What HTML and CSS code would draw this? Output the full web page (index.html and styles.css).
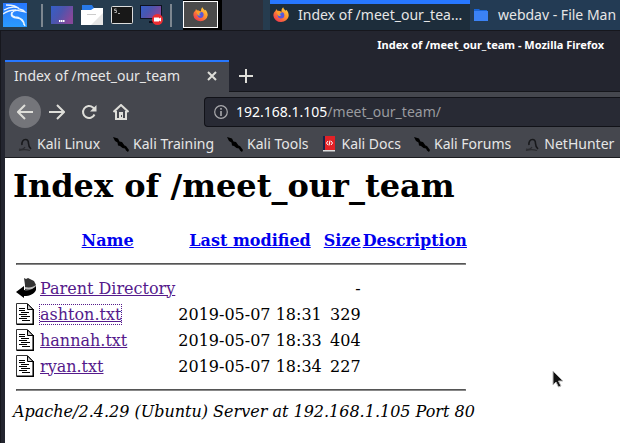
FILE: index.html
```html
<!DOCTYPE html>
<html lang="en">
<head>
<meta charset="utf-8">
<title>Index of /meet_our_team</title>
<link rel="stylesheet" href="styles.css">
</head>
<body>
<svg class="defs" aria-hidden="true">
  <defs>
    <linearGradient id="screen" x1="0" y1="0" x2="1" y2=".5"><stop offset="0" stop-color="#345fc8"/><stop offset=".5" stop-color="#4c55ae"/><stop offset="1" stop-color="#86489b"/></linearGradient>
    <linearGradient id="flame" x1="1" y1="0" x2=".2" y2="1"><stop offset="0" stop-color="#ffe14a"/><stop offset=".45" stop-color="#ff9a2e"/><stop offset="1" stop-color="#f0334f"/></linearGradient>
    <linearGradient id="kali" x1="0" y1="0" x2="0" y2="1"><stop offset="0" stop-color="#2777ff"/><stop offset="1" stop-color="#2a9bff"/></linearGradient>
    <symbol id="firefox" viewBox="0 0 16 16">
      <path fill="url(#flame)" d="M3.2 2.1 4.6 4l1.5-.2L8.5 5c-.2-2 .3-3.700 1.700-4.800.2 1.700 1.600 2.300 2.600 3.600l.5-1c1.600 1.700 2.500 3.800 2.400 6.100A7.700 7.100 0 0 1 .4 8.700C.3 6.200 1.300 4.800 2.500 4z"/>
      <circle cx="8" cy="8.300" r="3.300" fill="#5b55d8"/>
      <path fill="#2aa2f5" d="m5 6 3.700.2-1.500 2-2.200 1z"/>
      <path fill="#ff9b2b" d="M3.200 4.200c1.500-.7 2.700-.5 3.500.4l2.100.5c.2.8-1.800 1-2.100 2-.2 1 .5 1.500 1.500 1.300-.8 1.200-2.700.8-3.600-.8z"/>
    </symbol>
    <symbol id="dragon" viewBox="0 0 16 16">
      <path fill="none" stroke="#18191c" stroke-width="1.600" d="M5 9C4.500 6 6 3.500 8.500 3.500c2 0 3 1.500 3 4 0 2 .5 3.500 2.500 5.500"/>
      <path fill="none" stroke="#2b2c30" stroke-width="1.300" d="M2 13c3 1 5 0 6-2M2 14.500c3-1 8-1 11 0"/>
    </symbol>
    <symbol id="blade" viewBox="0 0 16 16">
      <path d="M0 1l5 1.500 1.500 3L9 6l2.500 3.500 1.500.5 3 4-1 2-2-1.500-1-2L9.500 12 7 10 5 9.500 4.500 6.500 2 5z"/>
    </symbol>
    <symbol id="file" viewBox="0 0 20 22">
      <path fill="#fff" stroke="#333" d="M.5.5h11l6 6v15H.5z"/>
      <path stroke="#000" stroke-width="1.500" d="M17.200 6v15.300H1" fill="none"/>
      <path fill="#ccc" stroke="#000" d="M11.500 1v5.500H17z"/>
      <path stroke="#000" d="M3 5.500h6M3 7.500h6M5 9.500h8M3 11.500h8M5 13.500h9M3 15.500h8M6 17.500h8"/>
    </symbol>
  </defs>
</svg>

<header class="panel">
  <nav class="launchers" aria-label="Launchers">
    <button class="launch" aria-label="Applications"><svg width="24" height="24" viewBox="0 0 24 24"><path fill="url(#kali)" d="M0 0h24v24H0z"/><path fill="none" stroke="#e8f4ff" stroke-width="1.300" d="M1 7c5-3 9-4 15-2M0 11c5-4 9-4 13-4M3 2c6 0 11 1 13 4l4 1 2 2-5-1c-2-1-4-1-6 0-3 2-3 5 1 6 5 0 8 3 10 9M9 9c-2 4 1 6 5 6s7 2 7 7"/></svg></button>
    <span class="divider"></span>
    <button class="launch" aria-label="Show desktop"><svg width="22" height="18" viewBox="0 0 22 18"><path fill="url(#screen)" d="M0 0h22v18H0z"/><path stroke="#fff" stroke-width="2" stroke-dasharray="1.500 .5" d="M8 15h6"/></svg></button>
    <button class="launch" aria-label="File manager"><svg width="22" height="20" viewBox="0 0 22 20"><path fill="#2879e8" d="M1 0h10l2 3h8v6H1z"/><path fill="#fff" d="M0 5h10l3-2h9v17H0z"/><path fill="#e5e5e5" d="m22 8-12 12h12z"/><path stroke="#ccc" d="M6 9.500h9"/></svg></button>
    <button class="launch" aria-label="Terminal"><svg width="22" height="18" viewBox="0 0 22 18"><rect x=".5" y=".5" width="21" height="17" rx="1" fill="#181818" stroke="#ddd"/><path d="M5.500 3H3.500v1.500h2v2h-2M7 7.500h2" fill="none" stroke="#aaa"/></svg></button>
    <button class="launch" aria-label="Screen recorder"><svg width="24" height="22" viewBox="0 0 24 22"><path fill="#0e1220" d="M0 1h22v14H0zM9 17h8v2H9z"/><path fill="url(#screen)" d="M1 2h20v12H1z"/><circle cx="17.500" cy="15.500" r="5.500" fill="#ed2d32"/><path fill="#fff" d="M14 13.500h5v1l2-1v4l-2-1v1h-5z"/></svg></button>
    <span class="divider"></span>
  </nav>
  <button class="workspace" aria-label="Workspace 1"><svg width="15" height="15"><use href="#firefox"/></svg></button>
  <span class="workspace-empty"></span>
  <nav class="tasks" aria-label="Open windows">
    <button class="task active"><svg width="16" height="16"><use href="#firefox"/></svg><span>Index of /meet_our_tea...</span></button>
    <button class="task"><svg width="16" height="16" viewBox="0 0 16 16"><path fill="#1763d5" d="M1 2h5l1 1h7v4H1z"/><path fill="#3b82f6" d="M1 4h14v10H1z"/></svg><span>webdav - File Man</span></button>
  </nav>
</header>

<main class="window">
  <div class="titlebar">Index of /meet_our_team - Mozilla Firefox</div>
  <div class="tabs">
    <div class="tab"><span>Index of /meet_our_team</span><button class="plain" aria-label="Close tab"><svg width="12" height="12" viewBox="0 0 12 12"><path class="line" d="m2 2 8 8M10 2 2 10"/></svg></button></div>
    <button class="plain new-tab" aria-label="New tab"><svg width="14" height="14" viewBox="0 0 14 14"><path class="line" d="M7 0v14M0 7h14"/></svg></button>
  </div>
  <div class="toolbar">
    <button class="plain back" aria-label="Back"><svg width="16" height="16" viewBox="0 0 16 16"><path class="line" d="M16 8H1M8 1 1 8l7 7"/></svg></button>
    <button class="plain tool" aria-label="Forward"><svg width="16" height="16" viewBox="0 0 16 16"><path class="line" d="M0 8h15M8 1l7 7-7 7"/></svg></button>
    <button class="plain tool" aria-label="Reload"><svg width="16" height="16" viewBox="0 0 16 16"><path class="line" d="M13.500 10.500A6 6 0 1 1 12 3.500l2 2"/><path fill="#deded9" d="M15.500 1v6.500H9z"/></svg></button>
    <button class="plain tool" aria-label="Home"><svg width="16" height="16" viewBox="0 0 16 16"><path class="line" d="M.5 8 8 1l7.500 7M3 7v8h10V7"/><path fill="#deded9" d="M6 8h4v7H6z"/><path fill="#484a50" d="M8 11h1v2H8z"/></svg></button>
    <div class="address">
      <svg width="14" height="14" viewBox="0 0 14 14"><circle cx="7" cy="7" r="6.300" fill="none" stroke="#aaaaad" stroke-width="1.200"/><path stroke="#aaaaad" stroke-width="1.600" d="M7 3v1.700M7 6v5"/></svg>
      <div class="url" role="textbox" aria-label="Address" contenteditable="true" spellcheck="false">192.168.1.105<span>/meet_our_team/</span></div>
    </div>
  </div>
  <nav class="bookmarks" aria-label="Bookmarks">
    <a href="#linux"><svg width="16" height="16"><use href="#dragon"/></svg>Kali Linux</a>
    <a href="#training"><svg width="16" height="16"><use href="#blade"/></svg>Kali Training</a>
    <a href="#tools"><svg width="16" height="16"><use href="#blade"/></svg>Kali Tools</a>
    <a href="#docs"><svg width="16" height="16" viewBox="0 0 16 16"><path fill="#e32227" d="M3 0h11v14H3z"/><path fill="#17244a" d="M2 0h2v15H2z"/><path fill="#ddd" d="M2 14h12v1.500H2z"/><path d="M7 5 5.500 7 7 9m3-4 1.500 2L10 9M9 4.500l-1 5" fill="none" stroke="#fff"/></svg>Kali Docs</a>
    <a href="#forums"><svg width="16" height="16"><use href="#blade"/></svg>Kali Forums</a>
    <a href="#nethunter"><svg width="16" height="16"><use href="#dragon"/></svg>NetHunter</a>
  </nav>
  <article class="page">
    <h1>Index of /meet_our_team</h1>
    <table>
      <thead>
        <tr><th class="icon"></th><th><a href="#name">Name</a></th><th><a href="#modified">Last modified</a></th><th><a href="#size">Size</a></th><th><a href="#description">Description</a></th></tr>
      </thead>
      <tbody>
        <tr><td class="rule" colspan="5"><hr></td></tr>
        <tr><td class="icon"><svg width="20" height="22" viewBox="0 0 20 22"><path fill="#333" d="M8 1l2 1 2-1 6 3 2 4v5H9V8z"/><path fill="#bbb" d="M9 10c5 1 8 0 11-2v2c-3 3-7 3-11 2z"/><path d="M0 15l8-6v4c6 1 9-1 12-4v4c-2 4-6 6-12 6v2z"/></svg></td><td><a href="#parent">Parent Directory</a></td><td></td><td class="num">-</td><td></td></tr>
        <tr><td class="icon"><svg width="20" height="22"><use href="#file"/></svg></td><td><a class="focused" href="#ashton">ashton.txt</a></td><td class="num">2019-05-07 18:31</td><td class="num">329</td><td></td></tr>
        <tr><td class="icon"><svg width="20" height="22"><use href="#file"/></svg></td><td><a href="#hannah">hannah.txt</a></td><td class="num">2019-05-07 18:33</td><td class="num">404</td><td></td></tr>
        <tr><td class="icon"><svg width="20" height="22"><use href="#file"/></svg></td><td><a href="#ryan">ryan.txt</a></td><td class="num">2019-05-07 18:34</td><td class="num">227</td><td></td></tr>
        <tr><td class="rule" colspan="5"><hr></td></tr>
      </tbody>
    </table>
    <address>Apache/2.4.29 (Ubuntu) Server at 192.168.1.105 Port 80</address>
  </article>
</main>
<svg class="pointer" width="12" height="19" viewBox="0 0 12 19" aria-hidden="true"><path fill="#111" stroke="#bbb" d="M1 1v14l3-3 2.500 5 2.500-1-2.500-5H11z"/></svg>
</body>
</html>
```
FILE: styles.css
```css
* { box-sizing: border-box; }
body {
  margin: 0;
  min-height: 100vh;
  display: flex;
  flex-direction: column;
  background: #16171d;
  color: #e6e6e6;
  font-family: "Noto Sans", sans-serif;
  font-size: 14px;
  line-height: 20px;
  white-space: nowrap;
}
button { border: 0; padding: 0; background: none; color: inherit; font: inherit; }
svg { display: block; flex: none; }
.defs { position: absolute; width: 0; height: 0; }

.panel { display: flex; height: 30px; background: #263c4f; }
.launchers { display: flex; align-items: center; gap: 7px; padding: 0 11px 0 3px; }
.launch { display: flex; justify-content: center; width: 23px; }
.launch:first-child { width: 24px; margin-right: 7px; }
.divider { width: 2px; height: 23px; background: #7d8790; }
.workspace {
  display: flex;
  align-items: center;
  justify-content: center;
  width: 35px;
  height: 27px;
  margin-top: 1px;
  border: 1px solid #fff;
  background: #4b4b4b;
  box-shadow: 0 0 0 4px #000;
  clip-path: inset(-1px -4px -2px 0);
}
.workspace-empty { width: 41px; margin-left: 4px; background: #2d303b; }
.tasks { display: flex; flex: 1; padding-left: 7px; min-width: 0; }
.task { display: flex; flex: 0 1 200px; align-items: center; gap: 9px; min-width: 0; padding: 0 3px; background: #233b54; }
.task.active { flex-shrink: 0; background: #1d2d3b; border-top: 4px solid #2777ff; padding-bottom: 4px; }

.window { flex: 1; display: flex; flex-direction: column; margin: 1px 0 0 1px; border-left: 4px solid #23252f; background: #23252f; }
.titlebar { height: 29px; padding: 4px 16px 0 0; text-align: right; font-size: 11px; font-weight: 700; color: #fff; }
.tabs { display: flex; height: 32px; border-bottom: 1px solid #15161b; }
.tab { display: flex; justify-content: space-between; align-items: center; width: 224px; height: 32px; padding: 0 11px 2px 9px; background: #45474e; border-top: 2px solid #2777ff; }
.line { fill: none; stroke: #deded9; stroke-width: 2; }
.new-tab { margin: 0 10px; }
.toolbar { display: flex; align-items: center; height: 39px; padding-left: 4px; background: #45474e; }
.back { display: flex; align-items: center; justify-content: center; width: 32px; height: 32px; border-radius: 50%; background: #74757a; }
.tool { display: flex; justify-content: center; width: 32px; }
.address { display: flex; flex: 1; align-items: center; gap: 8px; height: 30px; margin-left: 67px; padding-left: 9px; border: 1px solid #111218; border-right: 0; border-radius: 4px 0 0 4px; background: #282a34; color: #fff; }
.url { outline: 0; }
.url span { color: #999a9f; }
.bookmarks { display: flex; align-items: center; gap: 13px; height: 27px; padding-left: 12px; background: #45474e; border-bottom: 1px solid #1b1c20; }
.bookmarks a { display: flex; align-items: center; gap: 4px; color: inherit; text-decoration: none; }

.page { flex: 1; padding: 9px 8px 8px; background: #fff; color: #000; font-family: "DejaVu Serif", serif; font-size: 16px; line-height: 19px; }
h1 { margin: 0 0 21px; font-size: 32px; line-height: 38px; }
table { border-spacing: 2px; }
th, td { height: 24px; padding: 1px; }
.icon { width: 22px; }
.rule { height: 20px; }
hr { margin: 8px 0; border: 1px solid; border-color: #555 #888 #888 #555; }
.num { text-align: right; }
th:nth-child(n+3), td:nth-child(n+3) { padding: 1px 0; }
th a { color: #0000ee; }
td a { color: #551a8b; }
.focused { outline: 1px dotted #551a8b; }
.pointer { position: absolute; left: 552px; top: 370px; }
```
